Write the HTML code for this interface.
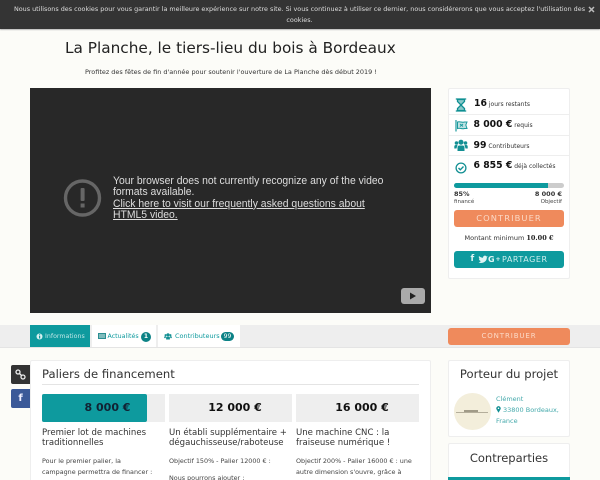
<!DOCTYPE html>
<html lang="fr"><head><meta charset="utf-8"><title>La Planche</title>
<style>
html,body{margin:0;padding:0;width:600px;height:480px;overflow:hidden}
body{background:#fcfcf8}
#w{position:relative;width:600px;height:480px;overflow:hidden;background:#fcfcf8;font-family:"DejaVu Sans",sans-serif;color:#333;filter:blur(.25px)}
.a{position:absolute;white-space:nowrap}
.c{text-align:center}
.card{position:absolute;background:#fff;border:1px solid #eee;box-sizing:border-box;border-radius:2px}
.t{color:#0e9a9e}
b{color:#111}
</style></head><body><div id="w">
<div class="a" style="left:0;top:0;width:600px;height:29px;background:#343434;box-shadow:0 1px 1px #bbb"></div>
<div class="a c" style="left:0;top:4px;width:599px;font-size:6.42px;line-height:11px;color:#ddd">Nous utilisons des cookies pour vous garantir la meilleure expérience sur notre site. Si vous continuez à utiliser ce dernier, nous considérerons que vous acceptez l'utilisation des<br>cookies.</div>
<svg class="a" style="left:588px;top:6px" width="7" height="7" viewBox="0 0 7 7"><path d="M1 1L6 6M6 1L1 6" stroke="#bbb" stroke-width="1.500"/></svg>

<div class="a" style="left:65px;top:39px;font-size:15.300px;line-height:18px;color:#222">La Planche, le tiers-lieu du bois à Bordeaux</div>
<div class="a" style="left:85px;top:67px;font-size:6.470px;line-height:11px;color:#333">Profitez des fêtes de fin d'année pour soutenir l'ouverture de La Planche dès début 2019 !</div>

<div class="a" style="left:30px;top:88px;width:401px;height:225px;background:#282828"></div>
<svg class="a" style="left:63px;top:179px" width="40" height="40" viewBox="0 0 40 40"><circle cx="19.500" cy="19" r="17" fill="none" stroke="#666" stroke-width="3.400"/><rect x="17.600" y="9" width="4" height="13" rx="1" fill="#666"/><rect x="17.600" y="24.500" width="4" height="4" fill="#666"/></svg>
<div class="a" style="left:112.500px;top:176px;font-family:'Liberation Sans',sans-serif;font-size:11.400px;line-height:11.300px;color:#ddd;transform:scaleX(.912);transform-origin:0 0">Your browser does not currently recognize any of the video<br>formats available.<br><u>Click here to visit our frequently asked questions about<br>HTML5 video.</u></div>
<div class="a" style="left:401px;top:288px;width:24px;height:16px;background:#aaa;border-radius:3px"></div>
<svg class="a" style="left:408px;top:292px" width="10" height="8"><path d="M2 0.500L8 4L2 7.500Z" fill="#222"/></svg>

<div class="card" style="left:448px;top:88px;width:122px;height:191px"></div>
<div class="a" style="left:449px;top:114px;width:120px;height:1px;background:#eee"></div>
<div class="a" style="left:449px;top:135px;width:120px;height:1px;background:#eee"></div>
<div class="a" style="left:449px;top:155px;width:120px;height:1px;background:#eee"></div>
<svg class="a" style="left:455px;top:98px" width="12" height="14" viewBox="0 0 12 14"><path d="M2.500 1.500V3.500L6 7L2.500 10.500V12.500H9.500V10.500L6 7L9.500 3.500V1.500Z" fill="#8cc9ca" stroke="#0e8f92" stroke-width="1.300"/><path d="M0.800 1H11.200M0.800 13H11.200" stroke="#0e8f92" stroke-width="1.300"/></svg>
<svg class="a" style="left:455px;top:119px" width="13" height="13" viewBox="0 0 13 13"><path d="M1 1V12.500" stroke="#1b9a9d" stroke-width="1.200"/><path d="M2.500 3C5 2 7 4 9.500 3L12 3L10.800 6L12 9.500H9.500C7 10.500 5 8.500 2.500 9.500Z" fill="#bfe2e3" stroke="#1b9a9d"/><path d="M5 5L8 7.500M8 5L5 7.500" stroke="#1b9a9d"/></svg>
<svg class="a" style="left:454px;top:139px" width="14" height="13" viewBox="0 0 14 13"><g fill="#128f93"><circle cx="7" cy="3.200" r="2.500"/><circle cx="2.500" cy="4" r="1.800"/><circle cx="11.500" cy="4" r="1.800"/><path d="M3.500 12V8.500Q3.500 6.500 5.500 6.500H8.500Q10.500 6.500 10.500 8.500V12Z"/><path d="M0.300 9.500V7.500Q0.300 6 2 6H3.500L2.500 9.500ZM13.700 9.500V7.500Q13.700 6 12 6H10.500L11.500 9.500Z"/></g></svg>
<svg class="a" style="left:455px;top:162px" width="12" height="12" viewBox="0 0 12 12"><circle cx="6" cy="6" r="4.900" fill="none" stroke="#128f93" stroke-width="1.300"/><path d="M3.500 6L5.300 7.800L8.500 4.500" fill="none" stroke="#128f93" stroke-width="1.400"/></svg>
<div class="a" style="left:474px;top:97px;font-size:6px;line-height:14px;color:#333"><b style="font-size:9.300px">16</b> jours restants</div>
<div class="a" style="left:473.500px;top:118px;font-size:6px;line-height:14px;color:#333"><b style="font-size:9.300px">8 000 €</b> requis</div>
<div class="a" style="left:473.500px;top:139px;font-size:6px;line-height:14px;color:#333"><b style="font-size:9.300px">99</b> Contributeurs</div>
<div class="a" style="left:473.500px;top:159px;font-size:6px;line-height:14px;color:#333"><b style="font-size:9.300px">6 855 €</b> déjà collectés</div>
<div class="a" style="left:454px;top:183px;width:110px;height:5px;background:#ccc;border-radius:3px"></div>
<div class="a" style="left:454px;top:183px;width:94px;height:5px;background:#0e9a9e;border-radius:3px 0 0 3px"></div>
<div class="a" style="left:454px;top:190px;font-size:6.500px;line-height:9px;font-weight:bold;color:#333">85%</div>
<div class="a" style="left:454px;top:198px;font-size:5.500px;line-height:8px;color:#444">financé</div>
<div class="a" style="right:38px;top:190px;font-size:6.500px;line-height:9px;font-weight:bold;color:#333">8 000 €</div>
<div class="a" style="right:38px;top:198px;font-size:5.500px;line-height:8px;color:#444">Objectif</div>
<div class="a c" style="left:454px;top:210px;width:110px;height:17px;line-height:17px;background:#ef8a5c;border-radius:3px;color:#fbd9c6;font-size:8.300px;letter-spacing:1.100px">CONTRIBUER</div>
<div class="a c" style="left:449px;top:233px;width:120px;font-size:6.500px;line-height:11px;color:#333">Montant minimum <b style="color:#222;font-family:'DejaVu Serif',serif">10.00 €</b></div>
<div class="a" style="left:454px;top:251px;width:110px;height:17px;background:#0e9a9e;border-radius:3px"></div>
<div class="a" style="left:470.500px;top:251px;line-height:17px;font-size:8.500px;color:#dff4f4;font-weight:bold">f</div>
<svg class="a" style="left:477.500px;top:255px" width="10" height="9" viewBox="0 0 10 9"><path d="M0.500 7.500C4 9 9 7 8.800 2.500L9.800 1.300L8.500 1.500C7.500 0 5 0.500 5 2.800C3.500 2.800 2 2 1 1C0.500 2 1 3.500 1.800 4L1 3.800C1 5 1.800 5.800 2.800 6C2 7 1.500 7.300 0.500 7.500Z" fill="#dff4f4"/></svg>
<div class="a" style="left:488px;top:251px;line-height:17px;font-size:8px;color:#dff4f4;font-weight:bold">G</div>
<div class="a" style="left:495.500px;top:251px;line-height:17px;font-size:6px;color:#dff4f4;font-weight:bold">+</div>
<div class="a" style="left:502px;top:251px;line-height:17px;font-size:8px;letter-spacing:.55px;color:#cdeeee">PARTAGER</div>

<div class="a" style="left:0;top:325px;width:600px;height:22px;background:#eee;border-bottom:1px solid #e4e4e4"></div>
<div class="a" style="left:30px;top:325px;width:60px;height:22px;background:#0e9a9e"></div>
<div class="a" style="left:92px;top:325px;width:64px;height:22px;background:#fff"></div>
<div class="a" style="left:158px;top:325px;width:82px;height:22px;background:#fff"></div>
<svg class="a" style="left:36px;top:332.500px" width="7" height="7"><circle cx="3.500" cy="3.500" r="3" fill="#d8f0f0"/><rect x="3" y="3" width="1.200" height="2.500" fill="#0e9a9e"/><rect x="3" y="1.300" width="1.200" height="1.100" fill="#0e9a9e"/></svg>
<div class="a" style="left:45px;top:331px;font-size:6.300px;line-height:11px;color:#bfe6e6">Informations</div>
<svg class="a" style="left:98px;top:333px" width="8" height="6"><rect x="0.500" y="0.500" width="7" height="5" fill="#7fbcbd" stroke="#2b8f92"/></svg>
<div class="a t" style="left:107.500px;top:331px;font-size:6.300px;line-height:11px">Actualités</div>
<div class="a c" style="left:141px;top:331.500px;width:10px;height:10px;line-height:10px;border-radius:5px;background:#0c8286;color:#fff;font-size:6px;font-weight:bold">1</div>
<svg class="a" style="left:164px;top:332.500px" width="8" height="7" viewBox="0 0 14 13"><g fill="#128f93"><circle cx="7" cy="3.200" r="2.800"/><circle cx="2.500" cy="4" r="2"/><circle cx="11.500" cy="4" r="2"/><path d="M3.500 12V8.500Q3.500 6.500 5.500 6.500H8.500Q10.500 6.500 10.500 8.500V12Z"/><path d="M0 9.500V7Q0 6 2 6H3.500L2.500 9.500ZM14 9.500V7Q14 6 12 6H10.500L11.500 9.500Z"/></g></svg>
<div class="a t" style="left:175px;top:331px;font-size:6.500px;line-height:11px">Contributeurs</div>
<div class="a c" style="left:221px;top:332px;width:13px;height:9px;line-height:9px;border-radius:5px;background:#0c8286;color:#fff;font-size:6px">99</div>
<div class="a c" style="left:448px;top:328px;width:122px;height:17px;line-height:17px;background:#ef8a5c;border-radius:3px;color:#fbd9c6;font-size:7px;letter-spacing:.9px">CONTRIBUER</div>

<div class="a" style="left:11px;top:365px;width:19px;height:19px;background:#333;border-radius:2px 0 0 2px"></div>
<svg class="a" style="left:15px;top:369px" width="11" height="11" viewBox="0 0 11 11"><g fill="none" stroke="#eee" stroke-width="1.300"><circle cx="3" cy="3" r="2"/><circle cx="8" cy="8" r="2"/><path d="M4.500 4.500L6.500 6.500"/></g></svg>
<div class="a c" style="left:11px;top:389px;width:19px;height:19px;line-height:19px;background:#3b5998;border-radius:2px 0 0 2px;color:#eef;font-size:10px;font-weight:bold">f</div>

<div class="card" style="left:30px;top:360px;width:401px;height:130px"></div>
<div class="a" style="left:42px;top:366px;font-size:11.600px;line-height:16px;color:#333">Paliers de financement</div>
<div class="a" style="left:42px;top:384px;width:377px;height:1px;background:#e4e4e4"></div>
<div class="a" style="left:42px;top:394px;width:123px;height:28px;background:#eee"></div>
<div class="a" style="left:42px;top:394px;width:105px;height:28px;background:#0e9a9e;border-radius:2px"></div>
<div class="a c" style="left:46px;top:394px;width:123px;line-height:28px;font-size:11px;font-weight:bold;color:#123">8 000 €</div>
<div class="a" style="left:169px;top:394px;width:123px;height:28px;background:#eee"></div>
<div class="a c" style="left:173.500px;top:394px;width:123px;line-height:28px;font-size:11px;font-weight:bold;color:#111">12 000 €</div>
<div class="a" style="left:296px;top:394px;width:123px;height:28px;background:#eee"></div>
<div class="a c" style="left:300.500px;top:394px;width:123px;line-height:28px;font-size:11px;font-weight:bold;color:#111">16 000 €</div>
<div class="a" style="left:42px;top:428px;font-size:8.550px;line-height:10px;color:#333">Premier lot de machines<br>traditionnelles</div>
<div class="a" style="left:169px;top:428px;font-size:8.550px;line-height:10px;color:#333">Un établi supplémentaire +<br>dégauchisseuse/raboteuse</div>
<div class="a" style="left:296px;top:428px;font-size:8.550px;line-height:10px;color:#333">Une machine CNC : la<br>fraiseuse numérique !</div>
<div class="a" style="left:42px;top:455.500px;font-size:6.400px;line-height:11.700px;color:#444">Pour le premier palier, la<br>campagne permettra de financer :</div>
<div class="a" style="left:169px;top:452.500px;font-size:6.400px;line-height:17px;color:#444">Objectif 150%  - Palier 12000 € :<br>Nous pourrons ajouter :</div>
<div class="a" style="left:296px;top:455.500px;font-size:6.400px;line-height:11.700px;color:#444">Objectif 200% - Palier 16000 € : une<br>autre dimension s'ouvre, grâce à</div>

<div class="card" style="left:448px;top:360px;width:122px;height:77px"></div>
<div class="a c" style="left:448px;top:366px;width:122px;font-size:11.600px;line-height:16px;color:#333">Porteur du projet</div>
<div class="a" style="left:454px;top:393px;width:36.500px;height:37px;border-radius:50%;background:#f3eedb"></div>
<div class="a" style="left:456px;top:411.500px;width:32px;height:1.500px;background:#8a8470;opacity:.6"></div>
<div class="a" style="left:464px;top:409.500px;width:14px;height:2px;background:#6a6450;opacity:.6"></div>
<div class="a" style="left:496px;top:393.500px;font-size:6.500px;line-height:11.300px;color:#44a9ab">Clément<br><svg width="5" height="7" viewBox="0 0 5 7" style="margin-right:2px;vertical-align:-1px"><path d="M2.500 6.800L0.600 3.500A2.200 2.200 0 1 1 4.400 3.500Z" fill="#128f93"/><circle cx="2.500" cy="2.300" r=".8" fill="#fff"/></svg>33800 Bordeaux,<br>France</div>
<div class="card" style="left:448px;top:443px;width:122px;height:50px"></div>
<div class="a c" style="left:448px;top:450px;width:122px;font-size:11.500px;line-height:16px;color:#333">Contreparties</div>
<div class="a" style="left:448px;top:477px;width:122px;height:3px;background:#0e9a9e"></div>
</div></body></html>
